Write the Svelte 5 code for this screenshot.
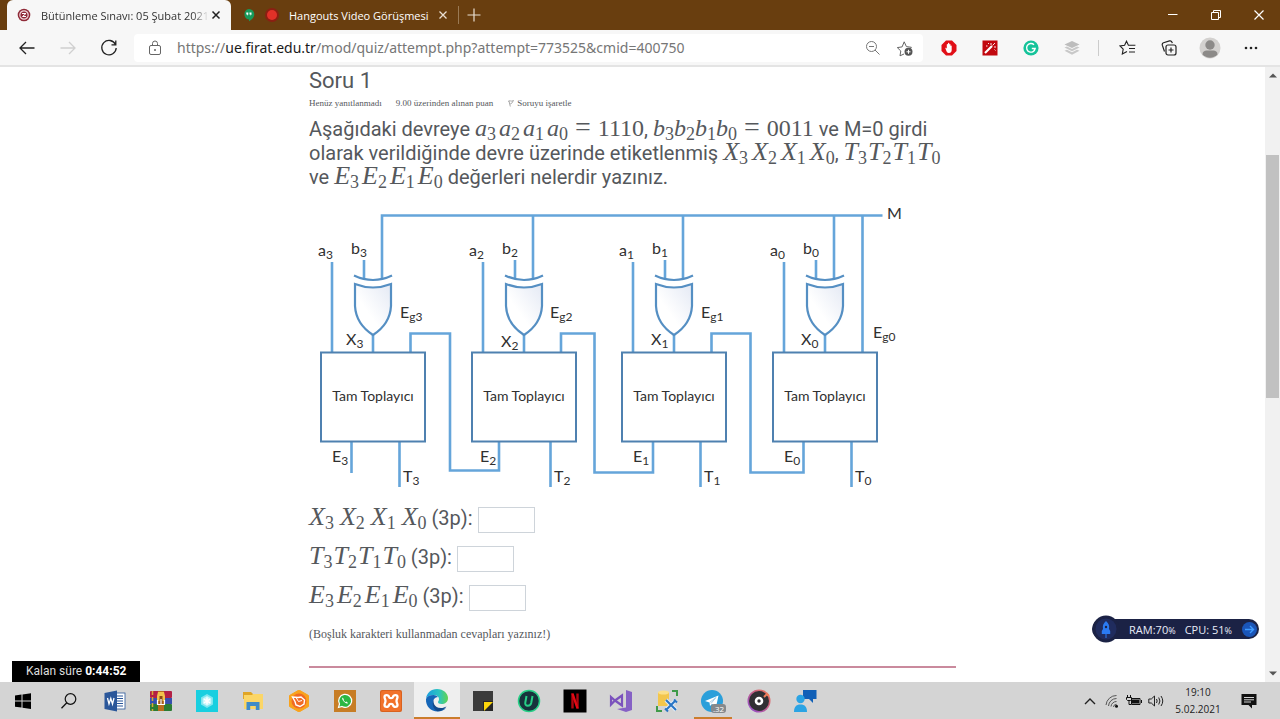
<script>
  const units = [
    { n: 3, dx: 0, xx: 346, xy: 345, egx: 400, egy: 318, ex: 332 },
    { n: 2, dx: 151, xx: 501, xy: 347, egx: 550, egy: 318, ex: 480 },
    { n: 1, dx: 301, xx: 651, xy: 345, egx: 701, egy: 318, ex: 633 },
    { n: 0, dx: 452, xx: 801, xy: 345, egx: 873, egy: 338, ex: 784 }
  ];
  const carries = [
    'M410.500 352V333.500H450V470.500H499V442',
    'M561 352V333.500H594.500V472.500H653V442',
    'M711.500 352V333.500H750.500V472.500H803.500V442'
  ];
  const answers = [
    { id: 'x', letter: 'X' },
    { id: 't', letter: 'T' },
    { id: 'e', letter: 'E' }
  ];
  const gaps = { a: 'mid', b: 'none', X: 'wide', T: 'slim', E: 'mid' };
  const digits = [3, 2, 1, 0];
</script>

{#snippet seq(letter)}<i class={['math', gaps[letter], letter < 'a' && 'cap']}>{#each digits as d}<span class="term">{letter}<sub>{d}</sub></span>{/each}</i>{/snippet}

<div class="screen">
  <header class="tabs">
    <div class="tab active">
      <svg width="14" height="14" viewBox="0 0 14 14"><circle cx="7" cy="7" r="6.300" fill="#8f2a38" /><circle cx="7" cy="7" r="4.200" fill="none" stroke="#f0d5d8" stroke-width="1.200" /><path d="M5 5.500h4L5.500 8.500H9" fill="none" stroke="#fff" stroke-width="1" /></svg>
      <span class="title fade">Bütünleme Sınavı: 05 Şubat 2021</span>
      <button aria-label="Sekmeyi kapat"><svg width="10" height="10" viewBox="0 0 10 10"><path d="M1.500 1.500l7 7M8.500 1.500l-7 7" stroke="#222" stroke-width="1.500" /></svg></button>
    </div>
    <div class="tab">
      <svg width="12" height="14" viewBox="0 0 12 14"><path d="M6 1a5.300 5.300 0 0 1 5.300 5.300C11.300 9.500 8.500 12 6 13.300V11.500A5.300 5.300 0 0 1 6 1z" fill="#179a5b" /><path d="M3.300 4.500h2v2l-1 1.300v-1.300h-1zM6.500 4.500h2v2l-1 1.300v-1.300h-1z" fill="#fff" /></svg>
      <svg width="16" height="16" viewBox="0 0 16 16"><circle cx="8" cy="8" r="7" fill="#8b1f12" /><circle cx="8" cy="8" r="5" fill="#e13128" /></svg>
      <span class="title">Hangouts Video Görüşmesi</span>
      <button aria-label="Sekmeyi kapat"><svg width="10" height="10" viewBox="0 0 10 10"><path d="M1.500 1.500l7 7M8.500 1.500l-7 7" stroke="#eadfd2" stroke-width="1.300" /></svg></button>
    </div>
    <span class="sep"></span>
    <button class="new" aria-label="Yeni sekme"><svg width="14" height="14" viewBox="0 0 14 14"><path d="M7 .5v13M.5 7h13" stroke="#eadfd2" stroke-width="1.200" /></svg></button>
    <div class="win">
      <button aria-label="Simge durumuna küçült"><svg width="12" height="12" viewBox="0 0 12 12"><path d="M1 5.500h9.500" stroke="#fff" /></svg></button>
      <button aria-label="Geri yükle"><svg width="12" height="12" viewBox="0 0 12 12"><path d="M1.500 3.500h7v7h-7zM3.500 3.500v-2h7v7h-2" fill="none" stroke="#fff" /></svg></button>
      <button aria-label="Kapat"><svg width="12" height="12" viewBox="0 0 12 12"><path d="M1.500 1.500l9 9M10.500 1.500l-9 9" stroke="#fff" stroke-width="1.200" /></svg></button>
    </div>
  </header>

  <nav class="toolbar">
    <div class="navs">
      <button aria-label="Geri"><svg width="18" height="16" viewBox="0 0 18 16"><path d="M16.500 8H2M8 2L2 8l6 6" fill="none" stroke="#222" stroke-width="1.300" /></svg></button>
      <button aria-label="İleri"><svg width="18" height="16" viewBox="0 0 18 16"><path d="M1.500 8H16M10 2l6 6-6 6" fill="none" stroke="#d0d0d0" stroke-width="1.300" /></svg></button>
      <button aria-label="Yenile"><svg width="18" height="18" viewBox="0 0 18 18"><path d="M15.500 5.500A7.200 7.200 0 1 0 16.200 9M15.800 1.500v4.300h-4.300" fill="none" stroke="#222" stroke-width="1.300" /></svg></button>
    </div>
    <div class="address">
      <svg width="14" height="16" viewBox="0 0 14 16"><rect x="1.500" y="5.500" width="11" height="9" rx="1.500" fill="none" stroke="#666" /><path d="M4.500 5.500v-2a2.500 2.500 0 0 1 5 0v2" fill="none" stroke="#666" /><circle cx="7" cy="10" r="1" fill="#666" /></svg>
      <span class="url">https://<b>ue.firat.edu.tr</b>/mod/quiz/attempt.php?attempt=773525&amp;cmid=400750</span>
      <button aria-label="Uzaklaştır"><svg width="16" height="16" viewBox="0 0 16 16"><circle cx="6.500" cy="6.500" r="5" fill="none" stroke="#777" /><path d="M4 6.500h5M10 10l4.500 4.500" stroke="#777" /></svg></button>
      <button aria-label="Sık kullanılanlara ekle"><svg width="18" height="18" viewBox="0 0 18 18"><path d="M8 15l-4 1.800.8-4.800-3.500-3.400 4.800-.7L8.200 2.800l2.200 4.800 5 .7-2 2" fill="none" stroke="#666" /><circle cx="12.500" cy="12.800" r="4" fill="#555" /><path d="M12.500 10.800v4M10.500 12.800h4" stroke="#fff" /></svg></button>
    </div>
    <div class="exts">
      <button aria-label="Reklam engelleyici"><svg width="16" height="16" viewBox="0 0 16 16"><path d="M5 .5h6L15.500 5v6L11 15.500H5L.5 11V5z" fill="#e10f17" /><path d="M4.300 8c.6-.5 1.200 0 1.500.7V4.500a.6.600 0 0 1 1.200 0v-1a.6.600 0 0 1 1.300 0v1a.6.600 0 0 1 1.200 0V6a.6.600 0 0 1 1.200 0v4c0 2-1 3-2.800 3C6 13 5.300 11 4.300 8z" fill="#fff" /></svg></button>
      <button aria-label="Sihirli değnek"><svg width="16" height="16" viewBox="0 0 16 16"><rect x=".5" y=".5" width="15" height="15" fill="#c1080f" /><path d="M3 13l7-7" stroke="#fff" stroke-width="2.200" /><path d="M10.500 5.500L13 3M9 3v2M12 7h2M6 3l1 1M12.500 9.500l1 1M4 6h1.500" stroke="#fff" stroke-width=".9" /></svg></button>
      <button aria-label="Yazım denetimi"><svg width="16" height="16" viewBox="0 0 16 16"><circle cx="8" cy="8" r="7.600" fill="#15c39a" /><path d="M11 4.800a4.300 4.300 0 1 0 1.200 3.700H8.800M12.200 8.500l-1.200 2.200" fill="none" stroke="#fff" stroke-width="1.400" /></svg></button>
      <button aria-label="Katmanlar"><svg width="16" height="16" viewBox="0 0 16 16"><path d="M8 1l7.500 3.500L8 8 .5 4.500z" fill="#bdbdbd" /><path d="M.5 7.500L3 6.500 8 9l5-2.500 2.500 1L8 11.300zM.5 10.800l2.500-1 5 2.400 5-2.400 2.500 1L8 14.800z" fill="#c8c8c8" /></svg></button>
      <span class="line"></span>
      <button aria-label="Sık kullanılanlar"><svg width="18" height="16" viewBox="0 0 18 16"><path d="M8 11.500L3.300 14l.9-4.800L1 5.900l4.600-.6L7.500 1.200l1.900 4.100h7M10 8.500h6M10 12h6" fill="none" stroke="#222" stroke-width="1.100" /></svg></button>
      <button aria-label="Koleksiyonlar"><svg width="16" height="16" viewBox="0 0 16 16"><rect x="5" y="5" width="10" height="10" rx="2" fill="none" stroke="#222" stroke-width="1.200" /><path d="M10 7.500v5M7.500 10h5M3.500 11.500L1.300 5.200C1 4 1.300 3.200 2.500 2.800l6-1.900c1.200-.3 2 .1 2.500 1.300l.3 1" fill="none" stroke="#222" stroke-width="1.200" /></svg></button>
      <button aria-label="Profil"><svg width="22" height="22" viewBox="0 0 22 22"><circle cx="11" cy="11" r="10.500" fill="#d3d1cf" /><circle cx="11" cy="8" r="4.700" fill="#8c8a88" /><path d="M3.500 17.500c0-3 2-4 4-4h7c2 0 4 1 4 4a10.500 10.500 0 0 1-15 0z" fill="#8c8a88" /></svg></button>
      <button aria-label="Ayarlar"><svg width="14" height="4" viewBox="0 0 14 4"><circle cx="2" cy="2" r="1.300" fill="#222" /><circle cx="7" cy="2" r="1.300" fill="#222" /><circle cx="12" cy="2" r="1.300" fill="#222" /></svg></button>
    </div>
  </nav>

  <div class="viewport">
    <main>
      <h3>Soru 1</h3>
      <div class="info">
        <span>Henüz yanıtlanmadı</span>
        <span>9.00 üzerinden alınan puan</span>
        <span class="flag"><svg width="7" height="8" viewBox="0 0 7 8"><path d="M1 2.500c2-2 3 .8 5.500-1L4.500 4.500c-1 .8-1.500-.2-2 .2M2 2l1.300 5.500" fill="none" stroke="#a9a9a9" /></svg>Soruyu işaretle</span>
      </div>
      <p class="question">
        Aşağıdaki devreye {@render seq('a')}<span class="num eq">=</span><span class="num">1110</span>, {@render seq('b')}<span class="num eq">=</span><span class="num">0011</span> ve M=0 girdi<br />
        olarak verildiğinde devre üzerinde etiketlenmiş {@render seq('X')}, {@render seq('T')}<br />
        ve {@render seq('E')} değerleri nelerdir yazınız.
      </p>

      <svg class="circuit" viewBox="309 200 647 296" role="img" aria-label="Tam toplayıcı devresi">
        <defs><linearGradient id="gate" x1="0" y1="1" x2="1" y2="0"><stop offset="0.400" stop-color="#fff" /><stop offset="1" stop-color="#e4e9f4" /></linearGradient></defs>
        <g fill="none" stroke="#65a5da" stroke-width="2.600">
          <path d="M382 279V215.500H882.500M533 215V279M683 215V279M834 215V279M862.500 215V352" />
          {#each carries as d}<path {d} />{/each}
          <path d="M351.500 442V473" />
          {#each units as u}
            <path transform="translate({u.dx} 0)" d="M332 262V352M364 260V278M373 335V352M399.500 442V487" />
          {/each}
        </g>
        {#each units as u}
          <g transform="translate({u.dx} 0)" stroke="#558fc3" stroke-width="2.200">
            <path d="M354 275.500Q373 284.500 392 275.500" fill="none" />
            <path d="M355 284Q373 291 391 284V306Q390 324 373 335Q356 324 355 306Z" fill="url(#gate)" />
            <rect x="321" y="352.500" width="104" height="89" fill="#fff" stroke="#4f81b0" stroke-width="2" />
          </g>
          <g class="lbl">
            <text x={318 + u.dx} y="256">a<tspan class="s" dy="3">{u.n}</tspan></text>
            <text x={351 + u.dx} y="254">b<tspan class="s" dy="3">{u.n}</tspan></text>
            <text x={u.xx} y={u.xy}>X<tspan class="s" dy="3">{u.n}</tspan></text>
            <text x={u.egx} y={u.egy}>E<tspan class="s" dy="3">g{u.n}</tspan></text>
            <text x={u.ex} y="462">E<tspan class="s" dy="3">{u.n}</tspan></text>
            <text x={403 + u.dx} y="482">T<tspan class="s" dy="3">{u.n}</tspan></text>
            <text class="box" x={373 + u.dx} y="401">Tam Toplayıcı</text>
          </g>
        {/each}
        <text class="lbl" x="887" y="219">M</text>
      </svg>

      <div class="answers">
        {#each answers as a}
          <div class="answer">
            <label for={a.id}>{@render seq(a.letter)} (3p):</label>
            <input id={a.id} type="text" />
          </div>
        {/each}
      </div>
      <p class="note">(Boşluk karakteri kullanmadan cevapları yazınız!)</p>
      <hr />
    </main>
    <div class="scroll">
      <svg width="8" height="5" viewBox="0 0 8 5"><path d="M0 4.500L4 .5l4 4z" fill="#555" /></svg>
      <div class="track"><div class="thumb"></div></div>
      <svg width="8" height="5" viewBox="0 0 8 5"><path d="M0 .5l4 4 4-4z" fill="#555" /></svg>
    </div>
    <div class="timer">Kalan süre <b>0:44:52</b></div>
    <div class="monitor">
      <svg width="28" height="28" viewBox="0 0 28 28"><circle cx="14" cy="14" r="13.500" fill="#1b2245" /><circle cx="14" cy="14" r="10.500" fill="#202c5e" /><path d="M14 6c3 2.500 3.500 5 3 8l1.200 2v3h-8.400v-3l1.200-2c-.5-3 0-5.500 3-8z" fill="#2b7bf3" /><circle cx="14" cy="12" r="1.200" fill="#1b2245" /><path d="M14 18v5" stroke="#2b7bf3" /></svg>
      <span>RAM:70<small>%</small></span>
      <span>CPU: 51<small>%</small></span>
      <svg width="17" height="17" viewBox="0 0 17 17"><circle cx="8.500" cy="8.500" r="7.500" fill="#1a55b8" /><path d="M4 8.500h8.500M9 5l3.500 3.500L9 12" fill="none" stroke="#3f9bff" stroke-width="1.400" /></svg>
    </div>
  </div>

  <footer class="taskbar">
    <button aria-label="Başlat"><svg width="16" height="16" viewBox="0 0 16 16"><path d="M0 2.500l6.500-.9v6H0zM7.500 1.400L16 .2v7.400H7.500zM0 8.600h6.500v6L0 13.700zM7.500 8.600H16V16l-8.500-1.200z" fill="#000" /></svg></button>
    <button aria-label="Ara"><svg width="16" height="16" viewBox="0 0 16 16"><circle cx="9.500" cy="6" r="5.300" fill="none" stroke="#111" stroke-width="1.200" /><path d="M5.800 9.700L.5 15.300" stroke="#111" stroke-width="1.300" /></svg></button>
    <button aria-label="Word"><svg width="22" height="22" viewBox="0 0 22 22"><rect x="10" y="3" width="11" height="16" fill="#fff" stroke="#2b579a" stroke-width=".8" /><path d="M13 6h6M13 8.500h6M13 11h6M13 13.500h6M13 16h6" stroke="#2b579a" /><path d="M.5 3L13 .5v21L.5 19z" fill="#2b579a" /><path d="M3.500 8l1.500 6 1.800-5.500L8.500 14 10 8" fill="none" stroke="#fff" stroke-width="1.300" /></svg></button>
    <button aria-label="WinRAR"><svg width="24" height="22" viewBox="0 0 24 22"><rect x="1" y="1" width="22" height="7" rx="1" fill="#b32045" /><rect x="1" y="8" width="22" height="6" fill="#3550ae" /><rect x="1" y="14" width="22" height="7" rx="1" fill="#2b7c34" /><path d="M3.500 1v20" stroke="#d8a834" stroke-width="1.500" stroke-dasharray="4 2" /><rect x="9" y="1" width="6" height="20" fill="#b76d20" /><path d="M9 2h6l1 4v5H8V6z" fill="#f2c34b" /><path d="M10.500 6h3v8h-3z" fill="#8b4a16" /><path d="M8.500 10v5M15.500 10v5M12 9v5M8 14.500h8" stroke="#fff" stroke-width="1.200" /></svg></button>
    <button aria-label="Kar tanesi"><svg width="22" height="22" viewBox="0 0 22 22"><rect width="22" height="22" fill="#18cfe0" /><path d="M11 4l6 3.500v7L11 18l-6-3.500v-7z" fill="#7ee6ef" /><path d="M11 6l4.300 2.500v5L11 16l-4.300-2.500v-5z" fill="#c6f6fa" /><path d="M11 7.500v7M8 9.200l6 3.600M14 9.200l-6 3.600" stroke="#fff" stroke-width="1.500" /></svg></button>
    <button aria-label="Dosya Gezgini"><svg width="22" height="20" viewBox="0 0 22 20"><path d="M1 1h8l2 2h9v5H1z" fill="#e0a526" /><path d="M2 4h8l1-1h10v15H2z" fill="#fbd667" /><path d="M4.500 19v-8h13v8h-3.700v-4H8.200v4z" fill="#3f8cc8" /></svg></button>
    <button aria-label="Altıgen"><svg width="22" height="22" viewBox="0 0 22 22"><path d="M11 0l9.500 5.500v11L11 22l-9.500-5.500v-11z" fill="#f9a21c" stroke="#f9a21c" stroke-linejoin="round" /><circle cx="11" cy="11" r="7.500" fill="#f06a25" /><path d="M4.500 7l5.500.5 3-.5 3.500 3-.5 4-4 2.500-4-1.500-1-3.500z" fill="none" stroke="#fff" stroke-width="1.400" /><path d="M8 7.500l2.500 4 3.500-1" fill="none" stroke="#fff" /></svg></button>
    <button aria-label="WhatsApp"><svg width="22" height="22" viewBox="0 0 22 22"><rect width="22" height="22" fill="#c77d25" /><path d="M4.500 17.500l1-3.500A6.500 6.500 0 1 1 8 16.500z" fill="#2cb742" stroke="#fff" stroke-width="1.200" /><path d="M8.500 7.500c-1 1.200.3 3 1.500 4.200s3 2.400 4 1.200l-1.700-1.300-.9.700-2-2.200.6-.8z" fill="#fff" /></svg></button>
    <button aria-label="XAMPP"><svg width="22" height="22" viewBox="0 0 22 22"><rect width="22" height="22" rx="2" fill="#d9621f" /><rect x="1" y="1" width="20" height="20" rx="2" fill="#f1722b" /><path d="M4.500 7C4.500 4.500 8.500 4.500 9 7c.3 1.500 3.700 1.500 4 0 .5-2.500 4.500-2.500 4.500 0 0 1.500-1 2-1 4s1 2.500 1 4c0 2.500-4 2.500-4.500 0-.3-1.500-3.700-1.500-4 0-.5 2.500-4.500 2.500-4.500 0 0-1.500 1-2 1-4s-1-2.500-1-4z" fill="none" stroke="#fff" stroke-width="2.300" /></svg></button>
    <button class="lit" aria-label="Edge"><svg width="24" height="24" viewBox="0 0 24 24"><defs><linearGradient id="eg" x1="0" x2="1"><stop offset="0" stop-color="#1a9de0" /><stop offset=".6" stop-color="#2cc5c0" /><stop offset="1" stop-color="#62d34e" /></linearGradient></defs><path d="M1 11C1.500 5 6 1 12 1c6.500 0 11 4.500 11 9 0 4-3 6-6.500 6-2.500 0-3.500-1-3.500-2 0-.8 1-1 1-3 0-2.300-2-4-5-4C4.500 7 1.500 9 1 11z" fill="url(#eg)" /><path d="M1 11c1-2.500 3.500-4 7.500-4 1.800 0 3.500.7 4.500 2-3 .2-5 2.500-5 5.500 0 4 3.500 7 8 7 2 0 4-.7 5.500-1.800C19.500 22 16 23.500 12.500 23.500 6 23.500.5 18.500 1 11z" fill="#1566b8" /><path d="M9 11c-1.200 2.500-.3 9 7 9 2 0 3.800-.6 5.500-1.500-2 3-5.500 4.800-9 4.800-4-1.800-6.500-7-3.500-12.300z" fill="#114a8c" /></svg></button>
    <button aria-label="Notlar"><svg width="22" height="22" viewBox="0 0 22 22"><path d="M1 1h20v10l-9 10H1z" fill="#3b3b3b" /><path d="M11 11h10v10H11z" fill="#262626" /><path d="M12 12h9l-9 9z" fill="#fbd50b" /></svg></button>
    <button aria-label="IObit"><svg width="24" height="24" viewBox="0 0 24 24"><circle cx="12" cy="12" r="10.500" fill="#17333c" stroke="#27cf86" stroke-width="1.500" /><path d="M9.500 7L8.300 13.500c-.4 2 .7 3.200 2.500 3.200s3-1 3.400-2.700L15.500 7" fill="none" stroke="#27cf86" stroke-width="2" /></svg></button>
    <button aria-label="Netflix"><svg width="24" height="24" viewBox="0 0 24 24"><rect x=".5" y=".5" width="23" height="23" fill="#000" /><path d="M9.500 4.500v15M14.500 4.500v15" stroke="#b00710" stroke-width="2.400" /><path d="M8.300 4.500h2.400l5 15h-2.400z" fill="#e50914" /></svg></button>
    <button aria-label="Visual Studio"><svg width="24" height="24" viewBox="0 0 24 24"><path d="M17 1l6 2v18l-6 2-9-3 9-1.500z" fill="#8661c5" /><path d="M2 8l4 3.500L13 6.500v10L6 11.500 2 15.500z" fill="none" stroke="#7b52bd" stroke-width="2.200" /></svg></button>
    <button aria-label="Veritabanı araçları"><svg width="24" height="24" viewBox="0 0 24 24"><path d="M3 3h11v14H3z" fill="#f3c64c" /><ellipse cx="8.500" cy="3.500" rx="5.500" ry="2" fill="#fbe08a" /><path d="M17 2h5v5M2 17v5h5" fill="none" stroke="#3f9a49" stroke-width="2" /><path d="M11 11l10 10M21 11L11 21" stroke="#e4eef8" stroke-width="4" /><path d="M11 11l10 10M21 11L11 21M19 10.500l3 3M10 19.500l3 3" stroke="#2874c4" stroke-width="2" /></svg></button>
    <button class="open" aria-label="Telegram"><svg width="26" height="24" viewBox="0 0 26 24"><circle cx="12" cy="12" r="11" fill="#2b9fda" /><path d="M5 12l13.500-5.500L16 18l-4-3-2 2-.5-3.500z" fill="#fff" /><path d="M9.500 13.500L16 8.500l-5 6" fill="none" stroke="#a9cfe6" /><rect x="11" y="15" width="15" height="9" rx="3" fill="#85898c" /><text x="18.500" y="22.500" font-size="8" text-anchor="middle" fill="#fff">.32</text></svg></button>
    <button aria-label="Müzik"><svg width="24" height="24" viewBox="0 0 24 24"><defs><linearGradient id="mu" x1="0" x2="1" y1="1" y2="0"><stop offset="0" stop-color="#8b4bd8" /><stop offset="1" stop-color="#f4734a" /></linearGradient></defs><circle cx="12" cy="12" r="11.500" fill="url(#mu)" /><circle cx="12" cy="12" r="10" fill="#312f33" /><circle cx="12" cy="12" r="3" fill="none" stroke="#fff" stroke-width="2.600" /><path d="M17 8l3-3 2 2" stroke="#ef7d5a" stroke-width="2" fill="none" /></svg></button>
    <button aria-label="Kişiler"><svg width="24" height="24" viewBox="0 0 24 24"><path d="M10 1h13.500v9H20v4l-4-4h-6z" fill="#1160b7" /><circle cx="7.500" cy="10" r="4.200" fill="#2ba4e4" /><path d="M1 23c0-5 2-7.500 6.500-7.500S14 18 14 23z" fill="#2ba4e4" /></svg></button>

    <div class="tray">
      <button aria-label="Gizli simgeler"><svg width="12" height="8" viewBox="0 0 12 8"><path d="M1 7l5-5 5 5" fill="none" stroke="#222" stroke-width="1.400" /></svg></button>
      <button aria-label="Ağ"><svg width="14" height="14" viewBox="0 0 14 14"><path d="M1 11A10.500 10.500 0 0 1 11.500 1.500M3.500 12A8 8 0 0 1 11.500 4.500M6 12.500A5.500 5.500 0 0 1 11.500 7.500M8.500 13A3 3 0 0 1 11.500 10.300" fill="none" stroke="#555" /><circle cx="11.500" cy="12.200" r="1.500" fill="#111" /></svg></button>
      <button aria-label="Pil"><svg width="16" height="12" viewBox="0 0 16 12"><path d="M5.500 3.500h8.500v6H5.500z" fill="none" stroke="#111" /><path d="M6 4.500h7v4H6z" fill="#111" /><path d="M15.500 5v3M1.500 0v2.500M4.500 0v2.500M.5 2.500h5v2l-1 1h-3l-1-1zM3 5v4.500h2" stroke="#111" fill="none" /></svg></button>
      <button aria-label="Ses"><svg width="16" height="14" viewBox="0 0 16 14"><path d="M.8 5h2.500L6.500 2v10L3.300 9H.8zM8.500 5q1.300 2 0 4M10.700 3.500q2.500 3.500 0 7M13 2q3.500 5 0 10" fill="none" stroke="#222" /></svg></button>
      <time>19:10<br />5.02.2021</time>
      <button class="notify" aria-label="Bildirimler"><svg width="16" height="16" viewBox="0 0 16 16"><path d="M.5 1h15v11H11v3.500L7.500 12h-7z" fill="#111" /><path d="M3 4.500h10M3 6.800h10M3 9h7" stroke="#d4d4d4" /></svg></button>
    </div>
  </footer>
</div>

<style>
  :global(body) { margin: 0; }
  * { box-sizing: border-box; }
  .screen { display: flex; flex-direction: column; height: 100vh; overflow: hidden; background: #fff; font-family: "Open Sans", sans-serif; }
  button { border: 0; padding: 0; background: none; display: flex; align-items: center; justify-content: center; font: inherit; color: inherit; }
  svg { flex: none; display: block; }

  .tabs { display: flex; align-items: center; height: 30px; background: #693e0f; font-size: 11px; color: #fff; padding-left: 7px; flex: none; }
  .tab { display: flex; align-items: center; height: 30px; gap: 9px; padding: 0 10px 0 12px; white-space: nowrap; }
  .tab.active { background: #f7f7f7; color: #333; border-radius: 6px 6px 0 0; width: 224px; gap: 10px; padding: 0 10px; }
  .title { overflow: hidden; }
  .fade { flex: 1; margin-right: -8px; mask-image: linear-gradient(90deg, #000 90%, transparent); }
  .sep { width: 1px; height: 18px; background: #9a7a55; }
  .new { width: 30px; height: 30px; }
  .win { display: flex; margin-left: auto; }
  .win button { width: 43px; height: 28px; }

  .toolbar { display: flex; align-items: center; height: 37px; background: #f7f7f7; border-bottom: 2px solid #e4e4e4; flex: none; }
  .navs { display: flex; width: 134px; padding-left: 6px; }
  .navs button { width: 41px; }
  .address { display: flex; flex: 1; align-items: center; height: 28px; background: #fff; border-radius: 4px; padding: 0 9px 0 14px; gap: 15px; font: 14px "Noto Sans", sans-serif; color: #767676; }
  .url { flex: 1; white-space: nowrap; }
  .url b { font-weight: 400; color: #1a1a1a; }
  .exts { display: flex; align-items: center; width: 357px; padding-left: 5px; }
  .exts button { width: 41px; }
  .line { width: 1px; height: 16px; background: #ccc; margin: 0 8px 0 6px; }

  .viewport { position: relative; display: flex; flex: 1; min-height: 0; overflow: hidden; }
  main { width: 100%; max-width: 647px; margin: 0 auto; padding-top: 1px; font-family: Roboto, sans-serif; color: #55585c; }
  h3 { margin: 0; font-size: 22px; line-height: 26px; font-weight: 400; }
  .info { display: flex; gap: 14px; margin-top: 3px; font-family: "Liberation Serif", serif; font-size: 9px; line-height: 12px; }
  .flag { display: flex; align-items: center; gap: 3px; }
  .question { margin: 8px 0 0; font-size: 20px; line-height: 24px; white-space: nowrap; }
  .math, .num { font-family: "Liberation Serif", serif; font-size: 24px; line-height: 0; }
  .math { font-style: italic; }
  .cap { font-size: 26px; }
  .mid .term { margin-right: 3px; }
  .wide .term { margin-right: 4px; }
  .slim .term { margin-right: 1px; }
  .answer .wide .term { margin-right: 6px; }
  .math .term:last-child { margin-right: 0; }
  .term sub { font-style: normal; font-size: 18px; line-height: 0; vertical-align: -4px; }
  .eq { margin: 0 7px; font-size: 28px; }
  .circuit { display: block; width: 100%; margin-top: 11px; }
  .lbl { font-family: Lato, sans-serif; font-size: 16px; fill: #303030; }
  .s { font-size: 12px; }
  .box { font-size: 14px; text-anchor: middle; }
  .answers { display: flex; flex-direction: column; gap: 13px; margin-top: 11px; }
  .answer { display: flex; align-items: center; gap: 5px; height: 26px; font-size: 20px; line-height: 22px; }
  .answer label { padding-bottom: 4px; }
  input { width: 57px; height: 26px; border: 1px solid #ced4da; background: #fff; padding: 0 4px; }
  .note { margin: 14px 0 0; font-family: "Liberation Serif", serif; font-size: 12px; line-height: 18px; }
  hr { border: 0; border-top: 2px solid #ca8a9d; margin: 23px 0 0; }

  .scroll { width: 15px; background: #f1f1f1; display: flex; flex-direction: column; align-items: center; padding: 6px 0; }
  .track { flex: 1; width: 13px; padding-top: 77px; }
  .thumb { height: 47%; background: #c1c1c1; }
  .timer { position: absolute; left: 12px; bottom: 0; padding: 0 14px; background: #000; color: #ddd; font: 12px/21px Roboto, sans-serif; }
  .timer b { color: #fff; }
  .monitor { position: absolute; right: 21px; bottom: 43px; display: flex; align-items: center; gap: 9px; height: 20px; padding-right: 1px; border-radius: 10px; background: #1b2245; color: #e8ecf8; font-size: 11px; white-space: nowrap; }
  .monitor small { font-size: 9px; }

  .taskbar { display: flex; align-items: center; height: 37px; background: #d4d4d4; flex: none; }
  .taskbar > button { width: 46px; height: 37px; }
  .taskbar > .open { background: linear-gradient(#cb7d2c, #cb7d2c) center bottom / 38px 2px no-repeat; }
  .taskbar > .lit { background: #efefef; border-bottom: 2px solid #cb7d2c; }
  .tray { display: flex; align-items: center; margin-left: auto; padding-right: 11px; color: #222; }
  .tray button { width: 22px; height: 37px; }
  time { width: 62px; text-align: center; font-size: 10px; line-height: 17px; }
  .tray .notify { width: 40px; }
</style>
